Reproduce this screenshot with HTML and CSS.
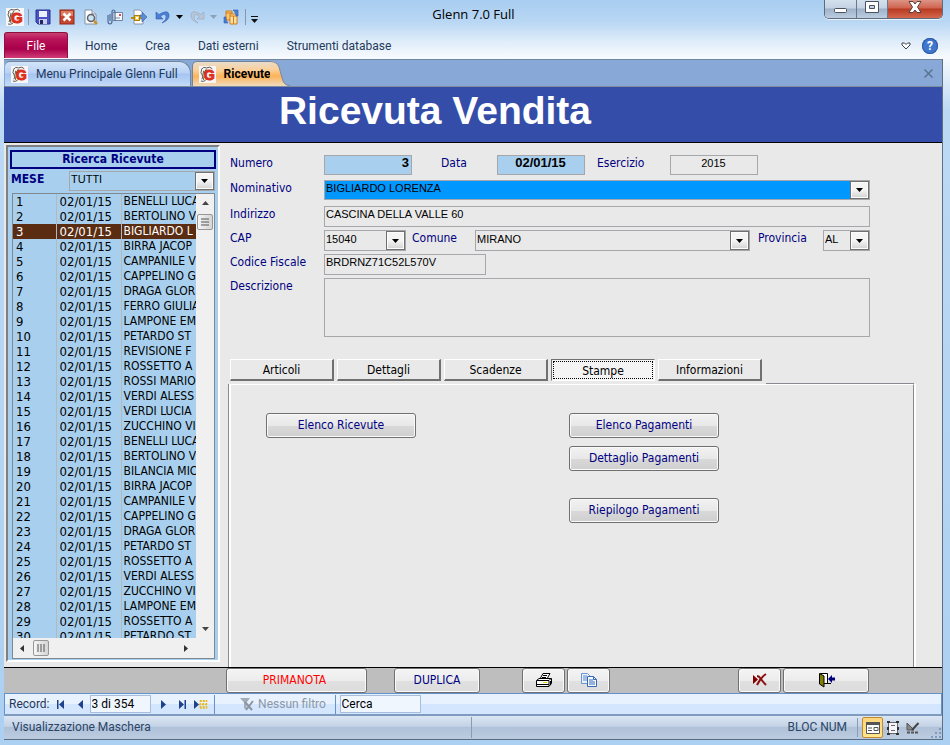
FILE: index.html
```html
<!DOCTYPE html>
<html lang="it">
<head>
<meta charset="utf-8">
<title>Glenn 7.0 Full</title>
<link rel="stylesheet" href="styles.css">
</head>
<body>
<svg class="defs" aria-hidden="true">
  <defs>
    <symbol id="logo" viewBox="0 0 18 18">
      <rect width="18" height="18" fill="#f6f6f4"/>
      <path d="M2 4q3-4 6-2q4-2 6 1M3 4q-2 3 0 5t0 5M5 5q-2 5 0 10M8 3q-3 3-2 6M2 16q3 1 5-1" fill="none" stroke="#5c5552" stroke-width="1"/>
      <text x="5" y="15" font-size="15" font-weight="bold" font-family="Liberation Sans, sans-serif" fill="#dc2f1b" stroke="#dc2f1b">G</text>
    </symbol>
    <symbol id="down" viewBox="0 0 7 4"><path d="M0 0h7L3.500 4z" fill="currentColor"/></symbol>
    <linearGradient id="orange" x1="0" y1="0" x2="0" y2="1">
      <stop offset="0" stop-color="#e9dccb"/><stop offset=".35" stop-color="#fbcf97"/><stop offset=".6" stop-color="#fbb35a"/><stop offset="1" stop-color="#f0dcc0"/>
    </linearGradient>
  </defs>
</svg>

<header class="titlebar">
  <div class="quick">
    <svg class="logo" viewBox="0 0 18 18"><use href="#logo"/></svg>
    <span class="sep"></span>
    <button aria-label="Salva"><svg viewBox="0 0 16 16"><path d="M1 1h14v14H3l-2-2z" fill="#4b52c4" stroke="#2b308c"/><path d="M4 2h8v6H4z" fill="#e9f0fb"/><path d="M4 10h8v5H4z" fill="#c9cdec"/><path d="M5 11h3v4H5z" fill="#23265c"/></svg></button>
    <button aria-label="Chiudi"><svg viewBox="0 0 16 16"><rect x="1" y="1" width="14" height="14" fill="#c8452f" stroke="#8c2a1b"/><path d="M2 2h12v5H2z" fill="#dc7a62"/><path d="M4.500 4.500l7 7m0-7l-7 7" stroke="#fff" stroke-width="2.500"/></svg></button>
    <button aria-label="Anteprima di stampa"><svg viewBox="0 0 16 16"><path d="M2 1h7l4 4v10H2z" fill="#fff" stroke="#8490a5"/><path d="M9 1v4h4" fill="#dbe3ee" stroke="#8490a5"/><circle cx="8" cy="9" r="3.500" fill="#cfe4f2" stroke="#59636e" stroke-width="1.500"/><path d="M11 12l3 3" stroke="#c8912f" stroke-width="2.500"/></svg></button>
    <button aria-label="Invia per posta"><svg viewBox="0 0 16 16"><path d="M6 3.500h9.500v8H6z" fill="#f6f9fd" stroke="#6f84a3"/><path d="M12 5h2v2h-2z" fill="#d05050"/><path d="M8 9h5" stroke="#7b8da8"/><path d="M1 6v6q0 3 2 3t2-3V3q0-2 1.500-2T8 3v9M3 12V5" fill="none" stroke="#4b6a96" stroke-width="1.200"/></svg></button>
    <button aria-label="Importa"><svg viewBox="0 0 16 16"><path d="M3 1h6l3 3v11H3z" fill="#fff" stroke="#8a94ab"/><path d="M9 6h2V3l5 5-5 5v-3H9z" fill="#5e8bd0" stroke="#365f9e" stroke-width=".6"/><path d="M0 9h10" stroke="#b78a13" stroke-width="2"/><rect x="3.500" y="6.500" width="5" height="5" fill="#f2d24a" stroke="#a77f14"/><path d="M5 8h2v2H5z" fill="#fff"/></svg></button>
    <button aria-label="Annulla"><svg viewBox="0 0 16 16"><path d="M1 3v7h7L5.500 7.500Q10 3.500 11 7T7 14Q15 11 14 5.500T4 5.500z" fill="#4c7fd8" stroke="#2f5cae" stroke-width=".6"/></svg></button>
    <button class="tiny" aria-label="Elenco annulla"><svg viewBox="0 0 7 4"><use href="#down"/></svg></button>
    <button aria-label="Ripeti"><svg viewBox="0 0 16 16"><path d="M15 3v7H8l2.500-2.500Q6 3.500 5 7t4 7Q1 11 2 5.500t10 0z" fill="#b9c6d8" stroke="#93a5bf" stroke-width=".6"/></svg></button>
    <button class="tiny dim" aria-label="Elenco ripeti"><svg viewBox="0 0 7 4"><use href="#down"/></svg></button>
    <button aria-label="Aggiorna tutto"><svg viewBox="0 0 16 16"><path d="M3 2h6v9H3z" fill="#fbc86a" stroke="#d07c1c"/><path d="M7 5h7v10H7z" fill="#fde0a0" stroke="#d07c1c"/><path d="M7 7h7M10.500 7v8M3 4h6" stroke="#d07c1c"/><path d="M1 8v6h4l-1-1.500Q2.500 11 3 8zM15 7V1h-5l1.500 1.500Q13 4 13 7z" fill="#4b7fd6" stroke="#2f5cae" stroke-width=".6"/></svg></button>
    <span class="sep"></span>
    <button class="tiny custom" aria-label="Personalizza"><svg viewBox="0 0 7 7"><path d="M0 0h7v1H0zM0 3h7L3.500 7z" fill="#111"/></svg></button>
  </div>
  <h1>Glenn 7.0 Full</h1>
  <div class="caption">
    <button aria-label="Riduci a icona"><svg viewBox="0 0 14 14"><rect x=".5" y="8.500" width="12" height="4" rx="1" fill="#fff" stroke="#4a5261"/></svg></button>
    <button aria-label="Ingrandisci"><svg viewBox="0 0 14 14"><path fill-rule="evenodd" d="M.5 1.500h13v11H.5zM4.500 5.500v3h5v-3z" fill="#fff" stroke="#4a5261"/></svg></button>
    <button class="close" aria-label="Chiudi finestra"><svg viewBox="0 0 14 14"><path d="M1 1.500h4L7 4l2-2.500h4L9.500 7l3.500 5.500H9L7 10l-2 2.500H1L4.500 7z" fill="#fff" stroke="#5d3c3c"/></svg></button>
  </div>
</header>

<nav class="ribbon">
  <button class="file">File</button>
  <a href="#">Home</a><a href="#">Crea</a><a href="#">Dati esterni</a><a href="#">Strumenti database</a>
  <button class="expand" aria-label="Espandi barra"><svg viewBox="0 0 10 8"><path d="M1 1h2.500L5 2.500 6.500 1H9v2L5 7 1 3z" fill="#fff" stroke="#3a4452"/></svg></button>
  <button class="help" aria-label="Guida">?</button>
</nav>

<main class="window">
  <div class="doctabs">
    <a href="#" class="doc"><svg class="logo" viewBox="0 0 18 18"><use href="#logo"/></svg>Menu Principale Glenn Full</a>
    <a href="#" class="doc active"><svg class="logo" viewBox="0 0 18 18"><use href="#logo"/></svg>Ricevute</a>
    <svg class="slant" viewBox="0 0 20 25"><path d="M0 0Q7 0 9 6L13 20Q15 25 20 25H0z" fill="url(#orange)"/><path d="M0 .5Q7 .5 9 6L13 20Q15 24.500 20 24.500" fill="none" stroke="#7d8796"/></svg>
    <button class="shut" aria-label="Chiudi scheda"><svg viewBox="0 0 9 9"><path d="M.5.5l8 8m0-8l-8 8" stroke="#5b7391" stroke-width="1.500"/></svg></button>
  </div>

  <div class="banner"><h2>Ricevuta Vendita</h2></div>

  <div class="work">
    <aside class="search">
      <h3>Ricerca Ricevute</h3>
      <div class="month">
        <label for="mese">MESE</label>
        <span class="combo"><select id="mese"><option>TUTTI</option></select><i><svg viewBox="0 0 7 4"><use href="#down"/></svg></i></span>
      </div>
      <div class="list">
        <div class="rows">
          <table>
            <tr><td>1<td>02/01/15<td>BENELLI LUCA</tr>
            <tr><td>2<td>02/01/15<td>BERTOLINO V</tr>
            <tr class="on"><td>3<td>02/01/15<td>BIGLIARDO L</tr>
            <tr><td>4<td>02/01/15<td>BIRRA JACOP</tr>
            <tr><td>5<td>02/01/15<td>CAMPANILE V</tr>
            <tr><td>6<td>02/01/15<td>CAPPELINO G</tr>
            <tr><td>7<td>02/01/15<td>DRAGA GLOR</tr>
            <tr><td>8<td>02/01/15<td>FERRO GIULIA</tr>
            <tr><td>9<td>02/01/15<td>LAMPONE EM</tr>
            <tr><td>10<td>02/01/15<td>PETARDO ST</tr>
            <tr><td>11<td>02/01/15<td>REVISIONE F</tr>
            <tr><td>12<td>02/01/15<td>ROSSETTO A</tr>
            <tr><td>13<td>02/01/15<td>ROSSI MARIO</tr>
            <tr><td>14<td>02/01/15<td>VERDI ALESS</tr>
            <tr><td>15<td>02/01/15<td>VERDI LUCIA</tr>
            <tr><td>16<td>02/01/15<td>ZUCCHINO VI</tr>
            <tr><td>17<td>02/01/15<td>BENELLI LUCA</tr>
            <tr><td>18<td>02/01/15<td>BERTOLINO V</tr>
            <tr><td>19<td>02/01/15<td>BILANCIA MIC</tr>
            <tr><td>20<td>02/01/15<td>BIRRA JACOP</tr>
            <tr><td>21<td>02/01/15<td>CAMPANILE V</tr>
            <tr><td>22<td>02/01/15<td>CAPPELINO G</tr>
            <tr><td>23<td>02/01/15<td>DRAGA GLOR</tr>
            <tr><td>24<td>02/01/15<td>PETARDO ST</tr>
            <tr><td>25<td>02/01/15<td>ROSSETTO A</tr>
            <tr><td>26<td>02/01/15<td>VERDI ALESS</tr>
            <tr><td>27<td>02/01/15<td>ZUCCHINO VI</tr>
            <tr><td>28<td>02/01/15<td>LAMPONE EM</tr>
            <tr><td>29<td>02/01/15<td>ROSSETTO A</tr>
            <tr><td>30<td>02/01/15<td>PETARDO ST</tr>
          </table>
        </div>
        <div class="vbar">
          <svg class="arrow" viewBox="0 0 7 4"><path d="M0 4h7L3.500 0z" fill="#444"/></svg>
          <span class="thumb"><svg viewBox="0 0 8 8"><path d="M0 1h8M0 4h8M0 7h8" stroke="#555"/></svg></span>
          <svg class="arrow end" viewBox="0 0 7 4"><use href="#down"/></svg>
        </div>
        <div class="hbar">
          <svg class="harrow" viewBox="0 0 4 7"><path d="M4 0v7L0 3.500z" fill="#333"/></svg>
          <span class="thumb"><svg viewBox="0 0 8 8"><path d="M1 0v8M4 0v8M7 0v8" stroke="#555"/></svg></span>
          <svg class="harrow end" viewBox="0 0 4 7"><path d="M0 0v7l4-3.500z" fill="#333"/></svg>
        </div>
      </div>
    </aside>

    <section class="detail">
      <form class="form">
        <div class="row r1">
          <label class="lead" for="num">Numero</label><input id="num" class="key num" value="3">
          <label class="data" for="data">Data</label><input id="data" class="key mid" value="02/01/15">
          <label class="eser" for="eser">Esercizio</label><input id="eser" class="year" value="2015">
        </div>
        <div class="row r2">
          <label class="lead" for="nom">Nominativo</label>
          <span class="combo picked grow"><select id="nom"><option>BIGLIARDO LORENZA</option></select><i><svg viewBox="0 0 7 4"><use href="#down"/></svg></i></span>
        </div>
        <div class="row r3">
          <label class="lead" for="ind">Indirizzo</label><input id="ind" class="grow" value="CASCINA DELLA VALLE 60">
        </div>
        <div class="row r3">
          <label class="lead" for="cap">CAP</label>
          <span class="combo cap"><select id="cap"><option>15040</option></select><i><svg viewBox="0 0 7 4"><use href="#down"/></svg></i></span>
          <label class="com" for="com">Comune</label>
          <span class="combo grow"><select id="com"><option>MIRANO</option></select><i><svg viewBox="0 0 7 4"><use href="#down"/></svg></i></span>
          <label class="prov" for="prov">Provincia</label>
          <span class="combo pr"><select id="prov"><option>AL</option></select><i><svg viewBox="0 0 7 4"><use href="#down"/></svg></i></span>
        </div>
        <div class="row r3">
          <label class="lead" for="cf">Codice Fiscale</label><input id="cf" class="cf" value="BRDRNZ71C52L570V">
        </div>
        <div class="row">
          <label class="lead" for="desc">Descrizione</label><textarea id="desc" class="grow"></textarea>
        </div>
      </form>

      <div class="tabs">
        <button>Articoli</button><button>Dettagli</button><button>Scadenze</button><button class="current">Stampe</button><button>Informazioni</button>
      </div>
      <div class="edge"></div>
      <div class="panel">
        <div class="prints">
          <button class="cmd">Elenco Ricevute</button>
        </div>
        <div class="prints">
          <button class="cmd">Elenco Pagamenti</button>
          <button class="cmd">Dettaglio Pagamenti</button>
          <button class="cmd apart">Riepilogo Pagamenti</button>
        </div>
      </div>
    </section>
  </div>

  <div class="actions">
    <button class="cmd red">PRIMANOTA</button>
    <button class="cmd dup">DUPLICA</button>
    <button class="cmd ico" aria-label="Stampa"><svg viewBox="0 0 18 16"><path d="M5.500 6L8 1.500h7L12.500 6" fill="#fff" stroke="#000"/><path d="M8 3.500h4M7 5.500h4" stroke="#000"/><path d="M1.500 8.500L4 6.500h12.500v5L14 14.500H1.500z" fill="#fff" stroke="#000"/><path d="M2 8.500h12l2-2M2 12.500h12M14 9v5M15.500 9v4" fill="none" stroke="#000"/><path d="M8 10h4v1H8z" fill="#e8d800"/></svg></button>
    <button class="cmd ico" aria-label="Copia"><svg viewBox="0 0 18 16"><path d="M1.500 1.500h6l3 3v7h-9z" fill="#eaf2fd" stroke="#6b94cf"/><path d="M3 4h4M3 6h5M3 8h4" stroke="#5c86c4"/><path d="M7.500 4.500h6l3 3v7h-9z" fill="#f5f9ff" stroke="#3769b5"/><path d="M13.500 4.500v3h3M9 8h4M9 10h6M9 12h6" fill="none" stroke="#3769b5"/></svg></button>
    <span class="fill"></span>
    <button class="cmd ico" aria-label="Elimina record"><svg viewBox="0 0 18 16"><path d="M2 3v9l5-4.500z" fill="#800000"/><path d="M6 4q2 0 4 3t5 6M15 2Q10 5 6 13" fill="none" stroke="#8c1010" stroke-width="2"/></svg></button>
    <button class="cmd exit" aria-label="Esci"><svg viewBox="0 0 18 16"><path d="M3.500 1.500h7v10h-7z" fill="#fff" stroke="#000"/><path d="M2.500 1.500L7 4v11l-4.500-3z" fill="#808000" stroke="#000"/><path d="M9 11.500h5" stroke="#000"/><path d="M11 7l4-4v2.500h3v3h-3V11z" fill="#00007f"/></svg></button>
  </div>

  <div class="recnav">
    <label for="rec">Record:</label>
    <button aria-label="Primo"><svg viewBox="0 0 10 9"><path d="M1 0h1.500v9H1zM8 0v9L3 4.500z" fill="#1d418c"/></svg></button>
    <button aria-label="Precedente"><svg viewBox="0 0 10 9"><path d="M8 0v9L3 4.500z" fill="#1d418c"/></svg></button>
    <input id="rec" value="3 di 354">
    <button aria-label="Successivo"><svg viewBox="0 0 10 9"><path d="M3 0v9l5-4.500z" fill="#1d418c"/></svg></button>
    <button aria-label="Ultimo"><svg viewBox="0 0 10 9"><path d="M2 0v9l5-4.500zM7.500 0H9v9H7.500z" fill="#1d418c"/></svg></button>
    <button class="new" aria-label="Nuovo"><svg viewBox="0 0 14 9"><path d="M0 0v9l5-4.500z" fill="#1d418c"/><path d="M6 1h7M5 4.500h9M6 8h7M6.500 0v9M9.500 0v9M12.500 0v9" stroke="#e9b81a" stroke-width="1.500" stroke-dasharray="2 1"/></svg></button>
    <button class="filter" disabled><svg viewBox="0 0 14 14"><path d="M0 1h10L6.500 5.500V13L4 11V5.500z" fill="#a3abb6"/><path d="M5 5l7 8M13 4l-7 9" stroke="#8b95a3" stroke-width="2"/></svg>Nessun filtro</button>
    <input class="find" aria-label="Cerca" value="Cerca">
  </div>

  <footer class="status">
    <span class="view">Visualizzazione Maschera</span>
    <span class="lock">BLOC NUM</span>
    <button class="picked" aria-label="Visualizzazione Maschera"><svg viewBox="0 0 14 12"><path d="M.5.5h13v11H.5z" fill="#fff" stroke="#555"/><path d="M0 0h14v3H0z" fill="#555"/><path d="M2 6h4M2 8.500h4" stroke="#555"/><path d="M8 5.500h4v3H8z" fill="#fff" stroke="#555"/></svg></button>
    <button aria-label="Visualizzazione Layout"><svg viewBox="0 0 14 12"><path d="M2.500.5h9v11h-9z" fill="#f4f6fa" stroke="#666"/><path d="M5 3.500h4M5 8.500h4" stroke="#666"/><path d="M1 0h3M10 0h3M1 12h3M10 12h3M2 5v3M12 5v3" stroke="#333" stroke-width="2"/></svg></button>
    <button aria-label="Visualizzazione Struttura"><svg viewBox="0 0 14 12"><path d="M1 1v7h7z" fill="#888" stroke="#555"/><path d="M12.500 1L6 8" stroke="#444" stroke-width="2"/><path d="M1 10.500h11" stroke="#555" stroke-width="2" stroke-dasharray="3 1"/></svg></button>
    <svg class="grip" viewBox="0 0 12 12"><path d="M9 1h2v2H9zM9 5h2v2H9zM5 5h2v2H5zM9 9h2v2H9zM5 9h2v2H5zM1 9h2v2H1z" fill="#7f9bc0"/></svg>
  </footer>
</main>
</body>
</html>
```
FILE: styles.css
```css
* { box-sizing: border-box; }

body {
  margin: 0;
  height: 100vh;
  display: flex;
  flex-direction: column;
  padding: 0 7px 5px 4px;
  overflow: hidden;
  background: linear-gradient(#a8cdf0 0, #b9d7f4 22px, #e0edfa 42px, #f7fafd 58px, #bcd9f4 110px, #acd0f2 100%);
  font-family: "DejaVu Sans Condensed", "DejaVu Sans", sans-serif;
  font-size: 12px;
  color: #000;
}
button, input, select, textarea { font: inherit; color: inherit; margin: 0; border-radius: 0; }
button { padding: 0; border: 0; background: none; }
h1, h2, h3 { margin: 0; }
a { color: inherit; text-decoration: none; }
svg { display: block; }
.defs { position: absolute; width: 0; height: 0; }

/* title bar */
.ribbon, .doctabs, .recnav, .status { font-family: Roboto, "Open Sans", sans-serif; }
.titlebar { height: 32px; flex: none; display: grid; grid-template-columns: 1fr auto 1fr; font-family: "Open Sans", "Noto Sans", sans-serif; }
.quick { display: flex; align-items: center; gap: 8px; padding: 2px 0 0 2px; }
.quick button { flex: none; width: 16px; height: 16px; }
.quick .logo { width: 18px; height: 18px; flex: none; }
.quick .sep { width: 1px; height: 16px; background: #8b97a6; margin: 0 -2px 0 -4px; }
.quick .tiny { width: 7px; height: 7px; margin: 0 -2px 0 -3px; display: flex; align-items: center; }
.quick .tiny svg { width: 7px; }
.quick .dim { color: #8f9fb4; }
.quick .sep ~ .sep { margin: 0 0 0 -2px; }
.quick .custom { margin: 4px 0 0 -3px; }
.titlebar h1 { font-weight: 400; font-size: 13px; line-height: 18px; padding-top: 5px; }
.caption { justify-self: end; display: flex; height: 19px; border: 1px solid #5f6c7d; border-top: 0; border-radius: 0 0 5px 5px; overflow: hidden; box-shadow: 0 1px 0 #e8f3fd; }
.caption button { width: 31px; display: grid; justify-content: center; border-right: 1px solid #6a788b; background: linear-gradient(#d4e0ed 0, #c3d2e3 8px, #9fb2c9 9px, #bccde0 100%); }
.caption button:first-child { width: 32px; }
.caption .close { width: 54px; border: 0; background: linear-gradient(#dd9485 0, #cf6450 8px, #b73a22 9px, #d5684d 100%); }
.caption svg { width: 14px; height: 14px; }

/* ribbon */
.ribbon { height: 27px; flex: none; display: flex; align-items: center; color: #1e395b; }
.ribbon a { margin-left: 28px; }
.ribbon .file { width: 64px; height: 26px; align-self: flex-start; margin-right: -11px; color: #fff; border: 1px solid #8c0f3c; border-bottom: 0; border-radius: 3px 3px 0 0; background: linear-gradient(#c84072 0, #b9145a 6px, #a8004a 16px, #d23b78 100%); }
.ribbon .expand { margin-left: auto; width: 10px; }
.ribbon .help { width: 16px; height: 16px; margin: 0 5px 0 11px; border-radius: 50%; background: #3f77cc; color: #fff; font-weight: 700; line-height: 16px; box-shadow: inset 0 0 0 1px #2c5aa5; }

/* document window */
.window { flex: 1; min-height: 0; display: flex; flex-direction: column; border-right: 1px solid #5f6e80; border-bottom: 1px solid #596b82; background: #e9e9e9; }
.doctabs { height: 28px; flex: none; display: flex; align-items: stretch; border-top: 1px solid #71869d; border-bottom: 1px solid #7f8b98; padding: 1px 0 0 1px; background: #88a9d7; }
.doc { display: flex; align-items: center; gap: 8px; padding: 0 12px 0 6px; border: 1px solid #71869d; border-width: 1px 1px 0 0; border-radius: 5px 12px 0 0; color: #1e395b; background: linear-gradient(#d3e3f8 0, #b9d2f5 11px, #a4c4f0 12px, #c5dbf8 100%); }
.doc .logo { width: 17px; height: 17px; }
.doc.active { margin-left: 1px; padding-right: 0; border-width: 1px 0 0 1px; border-radius: 5px 0 0 0; font-weight: 700; color: #000; background: linear-gradient(#e9dccb, #fbcf97 35%, #fbb35a 60%, #f0dcc0); }
.slant { width: 20px; height: 25px; }
.shut { margin: 0 9px 0 auto; }
.shut svg { width: 9px; }
.banner { height: 56px; flex: none; border-bottom: 1px solid #000; background: #344da9; color: #fff; text-align: center; }
.banner h2 { font: bold 39px/48px "Liberation Sans", sans-serif; padding-right: 76px; }

/* search list */
.work { flex: 1; min-height: 0; display: flex; }
.search { width: 214px; margin: 2px 0 5px 2px; padding: 3px 2px 1px; display: flex; flex-direction: column; border: 2px solid #808080; border-right-color: #fff; border-bottom-color: #fff; background: #a8d0ee; color: #000080; font-size: 13px; }
.search h3 { font-size: 12px; line-height: 15px; text-align: center; border: 2px solid #000080; height: 19px; flex: none; }
.month { display: flex; justify-content: space-between; height: 20px; margin: 2px 1px; flex: none; }
.month label { font-weight: 700; font-size: 12px; line-height: 16px; }
.month .combo { width: 146px; }
.list { flex: 1; min-height: 0; margin: 0 1px 0 2px; display: grid; grid-template: minmax(0, 1fr) 20px / minmax(0, 1fr) 18px; border: 1px solid #808890; color: #000; }
.rows { overflow: hidden; }
.rows table { border-collapse: collapse; table-layout: fixed; width: 100%; line-height: 15px; }
.rows td { padding: 0 0 0 3px; height: 15px; white-space: nowrap; overflow: hidden; }
.rows td:nth-child(1) { width: 43px; }
.rows td:nth-child(2) { width: 65px; }
.rows td:nth-child(3) { font-size: 12px; padding-left: 2px; }
.rows td + td { border-left: 1px solid #b4b9bd; }
.rows .on { background: #5a2c12; color: #fff; }
.vbar { background: #f0f0f0; display: flex; flex-direction: column; align-items: center; }
.arrow { width: 7px; height: 4px; margin: 7px 0 9px; }
.arrow.end { margin: auto 0 7px; color: #444; }
.thumb { width: 16px; height: 16px; display: grid; place-content: center; border: 1px solid #979797; border-radius: 2px; background: linear-gradient(90deg, #f5f5f5, #d5d5d5); }
.thumb svg { width: 8px; height: 8px; }
.hbar { grid-column: 1 / -1; display: flex; align-items: center; background: #f0f0f0; }
.harrow { width: 4px; height: 7px; margin: 0 9px 0 7px; }
.harrow.end { margin: 0 26px 0 auto; }

/* receipt form */
.detail { flex: 1; min-width: 0; display: flex; flex-direction: column; padding: 12px 28px 0 9px; }
.form { display: flex; flex-direction: column; padding: 0 44px 0 1px; color: #000080; }
.row { display: flex; }
.row label { line-height: 16px; flex: none; }
.row .lead { width: 94px; }
.r1, .r2 { height: 20px; margin-bottom: 5px; }
.r2 { margin-bottom: 6px; }
.r3 { height: 21px; margin-bottom: 3px; }
.row input, .combo, .row textarea { font-family: "Liberation Sans", sans-serif; font-size: 11px; border: 1px solid #a5a7ab; background: #e9e9e9; color: #000; }
.row input { padding: 0 2px 5px 1px; width: 88px; }
.row .key { font-weight: 700; font-size: 13px; background: #a8d0ee; }
.row .num { text-align: right; }
.row .mid, .row .year { text-align: center; }
.row .cf { width: 162px; }
.row .grow { flex: 1; min-width: 0; }
.row .data { width: 56px; margin-left: 29px; }
.row .eser { width: 73px; margin-left: 12px; }
.row .com { width: 63px; margin-left: 6px; }
.row .prov { width: 65px; margin-left: 8px; }
.combo { position: relative; display: flex; }
.combo select { flex: 1; min-width: 0; appearance: none; border: 0; padding: 0 20px 4px 1px; background: none; color: #000; }
.combo i { position: absolute; top: 0; right: 0; bottom: 0; width: 19px; display: grid; place-content: center; border: 1px solid #707070; background: linear-gradient(#f4f4f4 50%, #d2d2d2); box-shadow: inset 0 0 0 1px #fcfcfc; pointer-events: none; color: #000; }
.combo i svg { width: 7px; height: 4px; }
.month .combo { background: #a8d0ee; }
.combo.picked { background: #0098ff; }
.cap { width: 82px; }
.pr { width: 47px; }
.row textarea { height: 59px; resize: none; display: block; }

/* section tabs */
.tabs { display: flex; gap: 3px; padding-left: 1px; margin-top: 22px; }
.tabs button { width: 104px; height: 22px; border: 1px solid #fff; border-right: 2px solid #707070; border-bottom: 2px solid #707070; background: #e9e9e9; }
.tabs .current { border: 1px solid #707070; border-right-color: #fff; border-bottom-color: #fff; outline: 1px dotted #000; outline-offset: -3px; background: #f4f4f4; padding-top: 1px; }
.edge { height: 1px; margin: 2px 0 0 537px; background: #888a92; }
.panel { flex: 1; display: flex; gap: 153px; padding: 28px 0 0 35px; border: 1px solid #fff; border-width: 1px 1px 0 2px; border-right-color: #888a92; box-shadow: -1px 0 0 #888a92, 2px 0 0 #fff; }
.prints { display: flex; flex-direction: column; gap: 8px; }
.cmd { width: 150px; height: 25px; flex: none; padding-bottom: 2px; border: 1px solid #707070; border-radius: 3px; box-shadow: inset 0 0 0 1px #fafafa; background: linear-gradient(#f2f2f2, #e8e8e8 50%, #d9d9d9 51%, #cfcfcf); color: #000080; }
.apart { margin-top: 19px; }

/* form footer */
.actions { height: 26px; flex: none; display: flex; gap: 2px; padding: 0 73px 0 222px; border-top: 1px solid #000; background: #bebebe; }
.actions .cmd { background: linear-gradient(#f4f4f4, #ececec 50%, #e0e0e0 51%, #dcdcdc); }
.actions .red { width: 141px; color: #f00; padding-right: 4px; }
.actions .dup { width: 86px; margin: 0 40px 0 25px; }
.actions .ico { width: 43px; display: grid; place-content: center; }
.actions .exit { width: 86px; display: grid; place-content: center; }
.actions svg { width: 18px; height: 16px; }
.fill { flex: 1; }

/* record navigator */
.recnav { height: 21px; flex: none; display: flex; align-items: center; border: 1px solid #6492cc; border-bottom: 0; padding-left: 4px; color: #1e395b; background: linear-gradient(#e8f2fe 50%, #d4e6fd 51%); }
.recnav button { width: 19px; height: 19px; display: grid; place-content: center; flex: none; }
.recnav button svg { width: 10px; height: 9px; }
.recnav input { width: 61px; height: 18px; padding: 0 1px; border: 1px solid #a5bddf; background: #f0f6fe; color: #000; }
.recnav label { margin-right: 2px; }
.recnav input + button { margin-left: 3px; }
.recnav .new svg { width: 14px; }
.recnav .filter { width: 122px; display: flex; align-items: center; gap: 4px; padding-left: 17px; margin: 0 4px 0 3px; border: 1px solid #6492cc; border-width: 0 1px; color: #8b96a6; }
.recnav .filter svg { width: 14px; height: 14px; }
.recnav .find { width: 81px; }

/* status bar */
.status { height: 25px; flex: none; display: flex; align-items: center; border-top: 2px solid #7f9cc0; padding-left: 8px; color: #2b4568; background: linear-gradient(#dbe6f3, #c3d2e5 45%, #b0c2d9 50%, #bccce0); }
.view { width: 460px; border-right: 1px solid #8a9cb4; line-height: 21px; }
.lock { margin-left: auto; padding-right: 10px; margin-right: 4px; border-right: 1px solid #8a9cb4; line-height: 19px; }
.status button { width: 20px; height: 21px; display: grid; place-content: center; flex: none; }
.status button svg { width: 14px; height: 12px; overflow: visible; }
.status .picked { width: 21px; border: 1px solid #c28a30; border-radius: 2px; background: linear-gradient(#fbd57b, #fee58e); }
.grip { width: 12px; height: 12px; align-self: flex-end; margin-left: 7px; }
```
